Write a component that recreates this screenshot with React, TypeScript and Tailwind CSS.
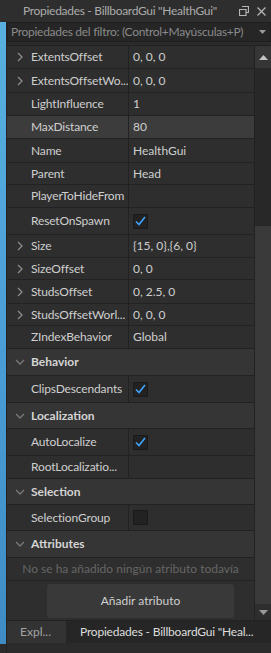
import React from 'react';

type Row =
  | { kind: 'prop'; name: string; value?: string; expand?: boolean; check?: boolean | 'empty'; h: number; active?: boolean }
  | { kind: 'head'; name: string; h: number }
  | { kind: 'note'; text: string; h: number };

const rows: Row[] = [
  { kind: 'prop', name: 'ExtentsOffset', value: '0, 0, 0', expand: true, h: 23 },
  { kind: 'prop', name: 'ExtentsOffsetWo...', value: '0, 0, 0', expand: true, h: 24 },
  { kind: 'prop', name: 'LightInfluence', value: '1', h: 23 },
  { kind: 'prop', name: 'MaxDistance', value: '80', h: 23, active: true },
  { kind: 'prop', name: 'Name', value: 'HealthGui', h: 24 },
  { kind: 'prop', name: 'Parent', value: 'Head', h: 22 },
  { kind: 'prop', name: 'PlayerToHideFrom', value: '', h: 23 },
  { kind: 'prop', name: 'ResetOnSpawn', check: true, h: 27 },
  { kind: 'prop', name: 'Size', value: '{15, 0},{6, 0}', expand: true, h: 23 },
  { kind: 'prop', name: 'SizeOffset', value: '0, 0', expand: true, h: 22 },
  { kind: 'prop', name: 'StudsOffset', value: '0, 2.5, 0', expand: true, h: 24 },
  { kind: 'prop', name: 'StudsOffsetWorl...', value: '0, 0, 0', expand: true, h: 22 },
  { kind: 'prop', name: 'ZIndexBehavior', value: 'Global', h: 23 },
  { kind: 'head', name: 'Behavior', h: 27 },
  { kind: 'prop', name: 'ClipsDescendants', check: true, h: 27 },
  { kind: 'head', name: 'Localization', h: 26 },
  { kind: 'prop', name: 'AutoLocalize', check: true, h: 27 },
  { kind: 'prop', name: 'RootLocalizatio...', value: '', h: 23 },
  { kind: 'head', name: 'Selection', h: 26 },
  { kind: 'prop', name: 'SelectionGroup', check: 'empty', h: 26 },
  { kind: 'head', name: 'Attributes', h: 27 },
  { kind: 'note', text: 'No se ha añadido ningún atributo todavía', h: 23 },
];

function ChevronRight() {
  return (
    <svg width="8" height="10" viewBox="0 0 8 10" className="shrink-0">
      <path d="M2 1 L6 5 L2 9" fill="none" stroke="#8c8c8c" strokeWidth="1.3" />
    </svg>
  );
}

function ChevronDown() {
  return (
    <svg width="10" height="8" viewBox="0 0 10 8" className="shrink-0">
      <path d="M1 2 L5 6 L9 2" fill="none" stroke="#7a7a7a" strokeWidth="1.3" />
    </svg>
  );
}

function Checkbox({ checked }: { checked: boolean }) {
  return (
    <div className="w-[15px] h-[15px] bg-[#222222] border border-[#1a1a1a] flex items-center justify-center">
      {checked && (
        <svg width="11" height="10" viewBox="0 0 11 10">
          <path d="M1 5.5 L4 8.5 L10 1" fill="none" stroke="#3ea6ff" strokeWidth="1.6" />
        </svg>
      )}
    </div>
  );
}

function PropRow({ row }: { row: Row }) {
  if (row.kind === 'head') {
    return (
      <div
        className="flex items-center bg-[#353535] border-b border-[#222222]"
        style={{ height: row.h }}
      >
        <div className="w-[24px] flex justify-center pl-[2px]">
          <ChevronDown />
        </div>
        <span className="font-bold text-[#d4d4d4]">{row.name}</span>
      </div>
    );
  }
  if (row.kind === 'note') {
    return (
      <div
        className="flex items-center justify-center bg-[#2e2e2e] border-b border-[#222222] text-[#666666]"
        style={{ height: row.h }}
      >
        {row.text}
      </div>
    );
  }
  return (
    <div
      className={`flex border-b border-[#222222] ${row.active ? 'bg-[#3c3c3c]' : 'bg-[#2e2e2e]'}`}
      style={{ height: row.h }}
    >
      <div className="w-[122px] flex items-center border-r border-[#222222] overflow-hidden whitespace-nowrap">
        <div className="w-[24px] shrink-0 flex justify-center pl-[1px]">{row.expand && <ChevronRight />}</div>
        <span className="text-[#cfcfcf] tracking-[-0.15px]">{row.name}</span>
      </div>
      <div className="flex-1 flex items-center pl-[4px] text-[#cfcfcf] whitespace-nowrap">
        {row.check !== undefined ? <Checkbox checked={row.check === true} /> : row.value}
      </div>
    </div>
  );
}

export default function App() {
  return (
    <div className="w-[271px] h-[653px] bg-[#2b2b2b] flex flex-col overflow-hidden font-['Lato',sans-serif] text-[12px] leading-none">
      {/* Title bar */}
      <div className="h-[22px] shrink-0 bg-[#2e2e2e] flex items-center pl-[23px] pr-[5px] text-[12px] tracking-[-0.3px] text-[#ababab]">
        <span className="flex-1 whitespace-nowrap">Propiedades - BillboardGui "HealthGui"</span>
        <svg width="10" height="10" viewBox="0 0 10 10" className="mr-[8px] shrink-0">
          <path d="M3 0.5 H9.5 V6.5 H7 M0.5 3.5 H7 V9.5 H0.5 Z" fill="none" stroke="#b5b5b5" strokeWidth="1.2" />
        </svg>
        <svg width="9" height="9" viewBox="0 0 9 9" className="shrink-0">
          <path d="M0.5 0.5 L8.5 8.5 M8.5 0.5 L0.5 8.5" stroke="#b5b5b5" strokeWidth="1.3" />
        </svg>
      </div>

      <div className="flex flex-1 min-h-0">
        {/* background strip */}
        <div className="w-[6px] shrink-0 flex flex-col">
          <div className="flex-1 bg-gradient-to-b from-[#58b0e0] via-[#4a9fd6] to-[#3f8cc4]" />
          <div className="h-[9px] bg-[#2b2b2b]" />
        </div>
        <div className="w-px shrink-0 bg-[#222222]" />

        <div className="flex-1 flex flex-col min-w-0">
          {/* Filter */}
          <div className="h-[20px] shrink-0 bg-[#262626] border border-[#1f1f1f] flex items-center pl-[3px] pr-[4px] text-[12px] tracking-[-0.3px] text-[#8a8a8a]">
            <span className="flex-1 whitespace-nowrap">Propiedades del filtro: (Control+Mayúsculas+P)</span>
            <svg width="7" height="4" viewBox="0 0 7 4" className="shrink-0 ml-[4px]">
              <path d="M0 0 H7 L3.5 4 Z" fill="#9a9a9a" />
            </svg>
          </div>
          <div className="h-[3px] shrink-0 bg-[#2b2b2b]" />

          {/* Grid + scrollbar */}
          <div className="h-[575px] shrink-0 flex border-t border-[#222222]">
            <div className="w-[247px] flex flex-col bg-[#2e2e2e]">
              {rows.map((r, i) => (
                <PropRow key={i} row={r} />
              ))}
              <div className="flex-1 flex items-center pl-[40px]">
                <div className="w-[187px] h-[34px] rounded-[3px] bg-[#393939] flex items-center justify-center text-[#cfcfcf]">
                  Añadir atributo
                </div>
              </div>
            </div>
            <div className="w-px bg-[#222222]" />
            <div className="flex-1 flex flex-col bg-[#292929]">
              <div className="h-[22px] bg-[#363636] flex items-center justify-center">
                <svg width="9" height="5" viewBox="0 0 9 5">
                  <path d="M0 5 H9 L4.5 0 Z" fill="#c4c4c4" />
                </svg>
              </div>
              <div className="h-[158px] bg-[#282828]" />
              <div className="flex-1 bg-[#3a3a3a]" />
              <div className="h-[16px] bg-[#2e2e2e] flex items-center justify-center">
                <svg width="9" height="5" viewBox="0 0 9 5">
                  <path d="M0 0 H9 L4.5 5 Z" fill="#9a9a9a" />
                </svg>
              </div>
            </div>
          </div>

          {/* Tabs */}
          <div className="h-[23px] shrink-0 flex border-t border-[#222222]">
            <div className="w-[59px] bg-[#333333] flex items-center pl-[13px] text-[12px] text-[#a3a3a3] whitespace-nowrap">
              Expl...
            </div>
            <div className="flex-1 bg-[#262626] flex items-center pl-[14px] text-[12px] tracking-[-0.2px] text-[#dddddd] whitespace-nowrap">
              Propiedades - BillboardGui "Heal...
            </div>
          </div>
          <div className="flex-1 bg-[#2b2b2b]" />
        </div>
      </div>
    </div>
  );
}
